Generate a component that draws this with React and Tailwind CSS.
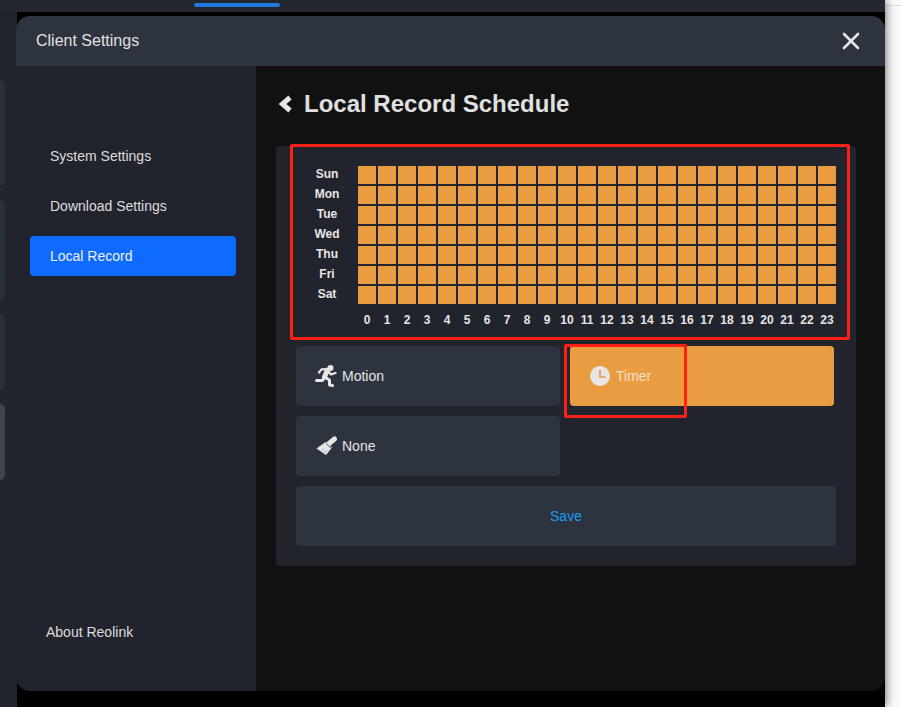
import React from "react";

const days = ["Sun", "Mon", "Tue", "Wed", "Thu", "Fri", "Sat"];
const hours = Array.from({ length: 24 }, (_, i) => i);

function Clock() {
  return (
    <svg width="20" height="20" viewBox="0 0 20 20" className="shrink-0">
      <circle cx="10" cy="10" r="10" fill="#e6e6e6" />
      <path d="M10 4V11H15.5" fill="none" stroke="#ea9c41" strokeWidth="1.6" />
    </svg>
  );
}

function Runner() {
  return (
    <svg width="22" height="22" viewBox="0 0 22 22" className="shrink-0">
      <circle cx="15.5" cy="3" r="3" fill="#e6e6e6" />
      <g fill="none" stroke="#e6e6e6" strokeLinejoin="round" strokeLinecap="round">
        <path d="M12.5 5L9.5 12" strokeWidth="5" />
        <path d="M11.5 4.2L6.5 4.4L4 7.5" strokeWidth="2.3" />
        <path d="M13 6L16 9.5L20.5 8" strokeWidth="2.3" />
        <path d="M9.5 12L7.5 15.5L1.5 15.5" strokeWidth="3" />
        <path d="M9.5 12L14.5 15L14.5 20L17.5 20.5" strokeWidth="3" />
      </g>
    </svg>
  );
}

function Brush() {
  return (
    <svg width="21" height="21" viewBox="0 0 21 21" className="shrink-0">
      <path d="M18.5 3L12.5 8" fill="none" stroke="#e6e6e6" strokeWidth="5" strokeLinecap="round" />
      <path d="M9.5 6L16 11.5L10 19L0.5 12.5Z" fill="#e6e6e6" />
      <path d="M10 7.5L15 12" stroke="#2d343f" strokeWidth="0.8" fill="none" />
      <path d="M5 15.5L8 12.5M8 17.5L11 14" stroke="#9a9ea3" strokeWidth="0.8" fill="none" />
    </svg>
  );
}

function ActionButton({ icon, label, active }) {
  return (
    <div
      className={`flex h-[60px] w-[264px] items-center rounded-[4px] pl-[19px] text-[14px] ${
        active ? "bg-[#ea9c41] text-[#f0e0d0]" : "bg-[#2d343f] text-[#e6e6e6]"
      }`}
    >
      <span className="mr-[5px] flex w-[22px] items-center justify-center">{icon}</span>
      {label}
    </div>
  );
}

export default function App() {
  return (
    <div
      className="relative flex h-[707px] w-[901px] overflow-hidden bg-[#fafafa] text-[14px] text-[#e6e6e6]"
      style={{ fontFamily: '"Liberation Sans", Arial, sans-serif' }}
    >
      <div className="absolute right-0 top-[5px] h-px w-[16px] bg-[#dddddd]" />
      <div className="relative z-10 flex h-full w-[885px] flex-col bg-black shadow-[0_0_10px_rgba(0,0,0,0.65)]">
        <div className="relative h-[12px] shrink-0 bg-[#22262e]">
          <div className="absolute left-[194px] top-[3px] h-[4px] w-[86px] rounded-full bg-[#1f78e0]" />
        </div>
        <div className="flex w-[17px] flex-1 flex-col bg-[#22252b] pt-[68px]">
          <div className="h-[106px] w-[5px] rounded-r-[8px] bg-[#2a3038]" />
          <div className="mt-[14px] h-[100px] w-[5px] rounded-r-[8px] bg-[#2a3038]" />
          <div className="mt-[14px] h-[76px] w-[5px] rounded-r-[8px] bg-[#2a3038]" />
          <div className="mt-[14px] h-[76px] w-[5px] rounded-r-[8px] bg-[#3a4550]" />
        </div>

        <div className="absolute left-[16px] top-[16px] flex h-[675px] w-[869px] flex-col overflow-hidden rounded-[14px] bg-[#111111]">
          <header className="flex h-[50px] shrink-0 items-center justify-between bg-[#2d343f] pl-[20px] pr-[24px] text-[16px] text-[#e0e0e0]">
            <span>Client Settings</span>
            <svg width="20" height="20" viewBox="0 0 20 20">
              <path d="M3 3L17 17M17 3L3 17" stroke="#e6e6e6" strokeWidth="2.6" strokeLinecap="round" />
            </svg>
          </header>

          <div className="flex min-h-0 flex-1">
            <aside className="flex w-[240px] shrink-0 flex-col bg-[#21242c] pl-[14px] pr-[20px] pt-[70px]">
              <div className="flex h-[40px] items-center pl-[20px] text-[#dddddd]">System Settings</div>
              <div className="mt-[10px] flex h-[40px] items-center pl-[20px] text-[#dddddd]">Download Settings</div>
              <div className="mt-[10px] flex h-[40px] items-center rounded-[4px] bg-[#0e6bff] pl-[20px] text-[#f0f0f0]">
                Local Record
              </div>
              <div className="mb-[48px] mt-auto pl-[16px] text-[#dddddd]">About Reolink</div>
            </aside>

            <main className="flex-1 px-[20px]">
              <div className="mb-[4px] flex h-[76px] items-center">
                <svg width="16" height="18" viewBox="0 0 16 18" className="ml-[1px]">
                  <path d="M13 2.5L5.5 9L13 15.5" fill="none" stroke="#e6e6e6" strokeWidth="5" />
                </svg>
                <h1 className="ml-[11px] text-[24px] font-bold text-[#e0e0e0]">Local Record Schedule</h1>
              </div>

              <section className="h-[420px] w-[580px] rounded-[4px] bg-[#21242c] p-[20px]">
                <div className="flex flex-col gap-[2px]">
                  {days.map((d) => (
                    <div key={d} className="flex h-[18px] items-center">
                      <div className="w-[62px] pb-[2px] text-center text-[12px] font-bold text-[#e6e6e6]">{d}</div>
                      <div className="flex gap-[2px]">
                        {hours.map((h) => (
                          <div key={h} className="h-[18px] w-[18px] bg-[#ea9c41]" />
                        ))}
                      </div>
                    </div>
                  ))}
                </div>
                <div className="mt-[6px] flex h-[20px] items-center pl-[62px]">
                  {hours.map((h) => (
                    <div
                      key={h}
                      className="w-[20px] shrink-0 pr-[2px] text-center text-[12px] font-bold text-[#e6e6e6]"
                    >
                      {h}
                    </div>
                  ))}
                </div>

                <div className="mt-[16px] flex gap-[10px]">
                  <ActionButton icon={<Runner />} label="Motion" />
                  <ActionButton icon={<Clock />} label="Timer" active />
                </div>
                <div className="mt-[10px]">
                  <ActionButton icon={<Brush />} label="None" />
                </div>
                <div className="mt-[10px] flex h-[60px] items-center justify-center rounded-[4px] bg-[#2d343f] text-[#1a9cf0]">
                  Save
                </div>
              </section>
            </main>
          </div>
        </div>
      </div>

      <div className="absolute left-[290px] top-[144px] z-20 h-[196px] w-[560px] rounded-[2px] border-[3px] border-[#ff2015]" />
      <div className="absolute left-[564px] top-[344px] z-20 h-[74px] w-[123px] rounded-[2px] border-[3px] border-[#ff2015]" />
    </div>
  );
}
